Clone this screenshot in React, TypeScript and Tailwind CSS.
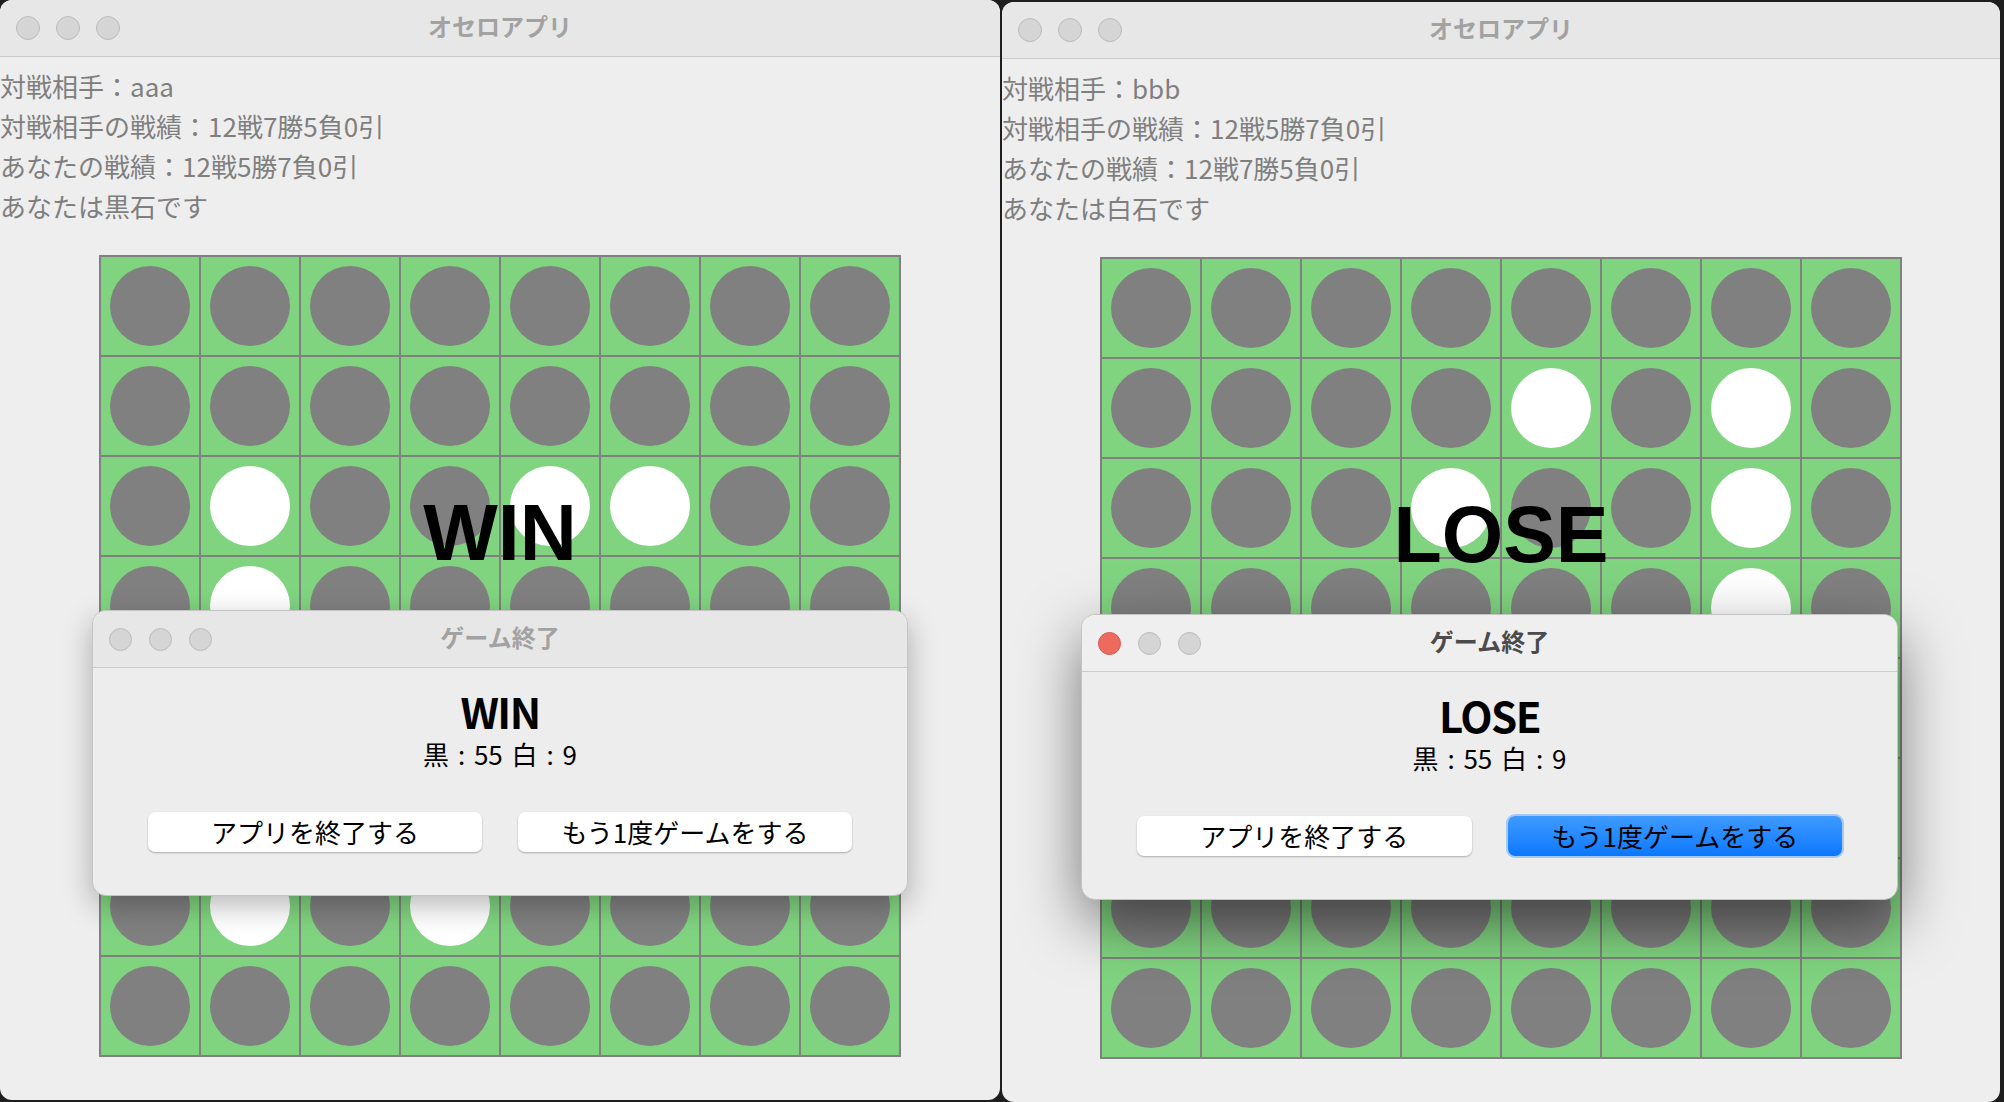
import React from "react";

const JP = "font-['Noto_Sans_CJK_JP','Noto_Sans',sans-serif]";

const WIN_BOARD = [
  "BBBBBBBB",
  "BBBBBBBB",
  "BWBBWWBB",
  "BWBBBBBB",
  "BBBWBBWB",
  "BBBBBWBB",
  "BWBWBBBB",
  "BBBBBBBB",
];

const LOSE_BOARD = [
  "BBBBBBBB",
  "BBBBWBWB",
  "BBBWBBWB",
  "BBBBBBWB",
  "BBWBBWBB",
  "BBBWBBWB",
  "BBBBBBBB",
  "BBBBBBBB",
];

function Lights({ active, size }: { active?: boolean; size: "win" | "dlg" }) {
  const dim = size === "win" ? "h-[24px] w-[24px]" : "h-[23px] w-[23px]";
  const gap = size === "win" ? "gap-[16px]" : "gap-[17px]";
  return (
    <div className={`flex items-center ${gap}`}>
      <div
        className={`${dim} rounded-full border ${
          active ? "border-[#d65a50] bg-[#ee6a5f]" : "border-[#bcbcbc] bg-[#d5d5d5]"
        }`}
      />
      <div className={`${dim} rounded-full border border-[#bcbcbc] bg-[#d5d5d5]`} />
      <div className={`${dim} rounded-full border border-[#bcbcbc] bg-[#d5d5d5]`} />
    </div>
  );
}

function TitleBar({
  title,
  active,
  size,
}: {
  title: string;
  active?: boolean;
  size: "win" | "dlg";
}) {
  return (
    <div
      className={`grid h-[57px] shrink-0 grid-cols-[1fr_auto_1fr] items-center border-b border-[#cbcbcb] px-[16px] ${
        active ? "bg-[#efefef]" : "bg-[#e7e7e7]"
      }`}
    >
      <Lights active={active} size={size} />
      <div
        className={`${JP} pb-[5px] text-[24px] font-bold leading-[30px] ${
          active ? "text-[#4b4b4b]" : "text-[#a2a2a2]"
        }`}
      >
        {title}
      </div>
      <div />
    </div>
  );
}

function Board({ rows, label }: { rows: string[]; label: string }) {
  const cells = rows.join("").split("");
  return (
    <div className="relative mx-auto grid w-[802px] grid-cols-8 border border-[#808080]">
      {cells.map((c, i) => (
        <div
          key={i}
          className="flex h-[100px] w-[100px] items-center justify-center border border-[#808080] bg-[#80d480]"
        >
          <div
            className={`h-[80px] w-[80px] rounded-full ${
              c === "W" ? "bg-white" : "bg-[#808080]"
            }`}
          />
        </div>
      ))}
      <div className="pointer-events-none absolute inset-x-0 top-[237px] text-center font-['Liberation_Sans',Arial,sans-serif] text-[79px] font-bold leading-[80px] text-black">
        {label}
      </div>
    </div>
  );
}

function Dialog({
  result,
  active,
  className,
}: {
  result: string;
  active?: boolean;
  className: string;
}) {
  return (
    <div
      className={`absolute flex h-[286px] flex-col overflow-hidden rounded-[14px] border border-[#c4c4c4] bg-[#ededed] ${
        active
          ? "shadow-[0_22px_60px_rgba(0,0,0,0.5)]"
          : "shadow-[0_10px_30px_rgba(0,0,0,0.28)]"
      } ${className}`}
    >
      <TitleBar title="ゲーム終了" active={active} size="dlg" />
      <div className={`flex flex-1 flex-col items-center ${JP} text-black`}>
        <div className="mt-[23px] text-[42px] font-bold leading-[40px] tracking-[-1.5px]">
          {result}
        </div>
        <div className="mt-[8px] text-[26px] leading-[30px] [word-spacing:3px]">
          黒 : 55 白 : 9
        </div>
        <div className="mt-[43px] flex w-full gap-[36px] px-[55px]">
          <div className="flex h-[40px] flex-1 items-center justify-center rounded-[7px] bg-white text-[26px] leading-none shadow-[0_1px_2px_rgba(0,0,0,0.28)]">
            アプリを終了する
          </div>
          <div
            className={`flex h-[40px] flex-1 items-center justify-center rounded-[7px] text-[26px] leading-none ${
              active
                ? "bg-linear-to-b from-[#3d9aff] to-[#0878ff] shadow-[0_0_0_2px_rgba(110,170,245,0.55)]"
                : "bg-white shadow-[0_1px_2px_rgba(0,0,0,0.28)]"
            }`}
          >
            もう1度ゲームをする
          </div>
        </div>
      </div>
    </div>
  );
}

function OthelloWindow({
  opponent,
  oppRecord,
  myRecord,
  myColor,
  rows,
  label,
  dialog,
  className,
}: {
  opponent: string;
  oppRecord: string;
  myRecord: string;
  myColor: string;
  rows: string[];
  label: string;
  dialog: React.ReactNode;
  className: string;
}) {
  return (
    <div
      className={`relative flex h-[1100px] shrink-0 flex-col overflow-hidden rounded-[12px] bg-[#eeeeee] ${className}`}
    >
      <TitleBar title="オセロアプリ" size="win" />
      <div className={`${JP} pt-[9px] text-[26px] leading-[40px] text-[#7f7f7f]`}>
        <div>対戦相手：{opponent}</div>
        <div>対戦相手の戦績：{oppRecord}</div>
        <div>あなたの戦績：{myRecord}</div>
        <div>あなたは{myColor}です</div>
      </div>
      <div className="mt-[29px]">
        <Board rows={rows} label={label} />
      </div>
      {dialog}
    </div>
  );
}

export default function App() {
  return (
    <div className="flex h-[1102px] w-[2004px] items-start gap-[2px] overflow-hidden bg-[#1e1e1e]">
      <OthelloWindow
        className="w-[1000px]"
        opponent="aaa"
        oppRecord="12戦7勝5負0引"
        myRecord="12戦5勝7負0引"
        myColor="黒石"
        rows={WIN_BOARD}
        label="WIN"
        dialog={<Dialog result="WIN" className="left-[92px] top-[610px] w-[816px]" />}
      />
      <OthelloWindow
        className="mt-[2px] w-[998px]"
        opponent="bbb"
        oppRecord="12戦5勝7負0引"
        myRecord="12戦7勝5負0引"
        myColor="白石"
        rows={LOSE_BOARD}
        label="LOSE"
        dialog={
          <Dialog result="LOSE" active className="left-[79px] top-[612px] w-[817px]" />
        }
      />
    </div>
  );
}
